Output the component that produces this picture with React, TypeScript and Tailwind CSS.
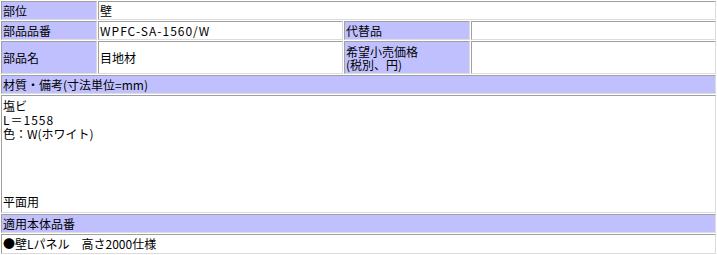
import React from 'react'

const cell = 'border border-t-[#a0a0a0] border-l-[#a0a0a0] border-r-[#dcdcdc] border-b-[#dcdcdc] p-0 pl-px align-middle'
const head = `${cell} bg-[#c0c0ff]`
const body = `${cell} bg-white`

const App = () => {
  return (
    <div className="w-[717px] h-[255px] bg-white text-black text-[12px] leading-[14px] font-['Noto_Sans_CJK_JP','Noto_Sans',sans-serif]">
      <table className="w-[717px] table-fixed border-separate border-spacing-[1px]">
        <colgroup>
          <col className="w-[96px]" />
          <col className="w-[245px]" />
          <col className="w-[126px]" />
          <col />
        </colgroup>
        <tbody>
          <tr className="h-[19px]">
            <td className={head}>部位</td>
            <td className={`${body} pl-[2px]`} colSpan={3}>壁</td>
          </tr>
          <tr className="h-[19px]">
            <td className={head}>部品品番</td>
            <td className={`${body} pl-[2px] tracking-[1px]`}>WPFC-SA-1560/W</td>
            <td className={head}>代替品</td>
            <td className={body}></td>
          </tr>
          <tr className="h-[33px]">
            <td className={head}>部品名</td>
            <td className={`${body} pl-[2px]`}>目地材</td>
            <td className={`${head} leading-[13px]`}>
              <div className="flex flex-col">
                <span>希望小売価格</span>
                <span>(税別、円)</span>
              </div>
            </td>
            <td className={body}></td>
          </tr>
          <tr className="h-[19px]">
            <td className={head} colSpan={4}>材質・備考(寸法単位=mm)</td>
          </tr>
          <tr className="h-[118px]">
            <td className={`${body} align-top`} colSpan={4}>
              <div className="flex flex-col h-[116px] pt-[3px]">
                <span>塩ビ</span>
                <span className="tracking-[1px]">L＝1558</span>
                <span>色：W(ホワイト)</span>
                <span className="mt-auto mb-[3px]">平面用</span>
              </div>
            </td>
          </tr>
          <tr className="h-[19px]">
            <td className={head} colSpan={4}>適用本体品番</td>
          </tr>
          <tr className="h-[20px]">
            <td className={body} colSpan={4}>●壁Lパネル　高さ2000仕様</td>
          </tr>
        </tbody>
      </table>
    </div>
  )
}

export default App
